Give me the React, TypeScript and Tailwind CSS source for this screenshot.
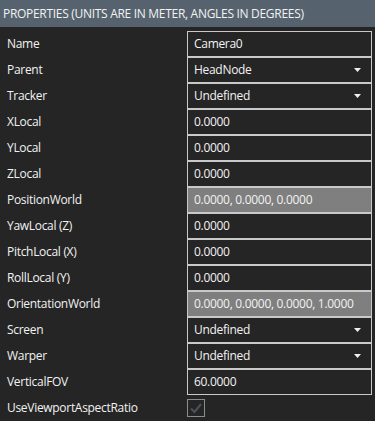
import React from 'react';

type Row = {
  label: string;
  value?: string;
  kind: 'text' | 'select' | 'readonly' | 'check';
};

const rows: Row[] = [
  { label: 'Name', value: 'Camera0', kind: 'text' },
  { label: 'Parent', value: 'HeadNode', kind: 'select' },
  { label: 'Tracker', value: 'Undefined', kind: 'select' },
  { label: 'XLocal', value: '0.0000', kind: 'text' },
  { label: 'YLocal', value: '0.0000', kind: 'text' },
  { label: 'ZLocal', value: '0.0000', kind: 'text' },
  { label: 'PositionWorld', value: '0.0000, 0.0000, 0.0000', kind: 'readonly' },
  { label: 'YawLocal (Z)', value: '0.0000', kind: 'text' },
  { label: 'PitchLocal (X)', value: '0.0000', kind: 'text' },
  { label: 'RollLocal (Y)', value: '0.0000', kind: 'text' },
  { label: 'OrientationWorld', value: '0.0000, 0.0000, 0.0000, 1.0000', kind: 'readonly' },
  { label: 'Screen', value: 'Undefined', kind: 'select' },
  { label: 'Warper', value: 'Undefined', kind: 'select' },
  { label: 'VerticalFOV', value: '60.0000', kind: 'text' },
  { label: 'UseViewportAspectRatio', kind: 'check' },
];

function ValueCell({ row }: { row: Row }) {
  if (row.kind === 'check') {
    return (
      <div className="h-[26px] flex items-center">
        <div className="w-[18px] h-[18px] border border-[#8c8c8c] flex items-center justify-center">
          <svg width="14" height="14" viewBox="0 0 14 14">
            <path d="M2 7.5 L5.5 11 L12 3" fill="none" stroke="#4b525a" strokeWidth="2" />
          </svg>
        </div>
      </div>
    );
  }
  const bg = row.kind === 'readonly' ? 'bg-[#7f7f7f]' : 'bg-[#252525]';
  return (
    <div className={`h-[26px] border border-[#c9c9c9] ${bg} flex items-center pl-[6px] pr-[10px]`}>
      <span className="flex-1 min-w-0 truncate">{row.value}</span>
      {row.kind === 'select' && (
        <svg width="7" height="4" viewBox="0 0 7 4">
          <path d="M0 0 H7 L3.5 4 Z" fill="#f0f0f0" />
        </svg>
      )}
    </div>
  );
}

export default function App() {
  return (
    <div className="w-[375px] h-[421px] bg-[#252525] text-[#f2f2f2] text-[12px] tracking-[-0.3px] font-['Open_Sans','Noto_Sans',sans-serif] overflow-hidden">
      <div className="h-[27px] bg-[#56636e] flex items-center pl-[3px] text-[12px]">
        PROPERTIES (UNITS ARE IN METER, ANGLES IN DEGREES)
      </div>
      <div className="pt-[4px] pr-[3px]">
        {rows.map((row) => (
          <div key={row.label} className="flex items-center">
            <div className="w-[187px] shrink-0 pl-[7px] truncate">{row.label}</div>
            <div className="flex-1 min-w-0">
              <ValueCell row={row} />
            </div>
          </div>
        ))}
      </div>
    </div>
  );
}
